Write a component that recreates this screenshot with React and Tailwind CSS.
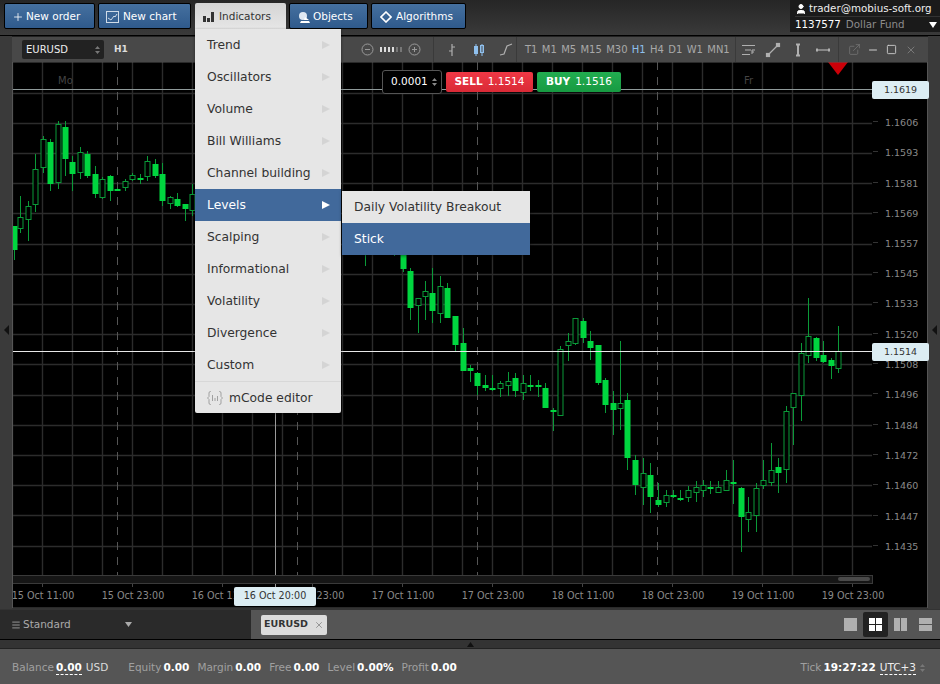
import React from 'react';
import { X, Plus, Minus, Square, ExternalLink, User, Menu } from 'lucide-react';

const FONT = 'font-["DejaVu_Sans",sans-serif]';

// x, high, low, open/close top, open/close bottom, hollow
const CANDLES = [
  [14, 226, 260, 226, 250, 0], [20, 196, 233, 217, 228, 1], [27.5, 201, 241, 206, 219, 1],
  [35, 154, 212, 169, 204, 1], [42.5, 136, 173, 139, 167, 1], [50, 139, 191, 142, 184, 0],
  [57.5, 121, 189, 124, 182, 1], [65, 121, 176, 127, 159, 0], [72, 156, 191, 162, 174, 0],
  [80, 147, 179, 152, 172, 1], [87, 151, 178, 154, 176, 0], [95, 166, 198, 174, 194, 0],
  [102, 177, 199, 179, 197, 1], [110, 175, 201, 176, 191, 0], [117, 188, 191, 189, 190, 0],
  [125, 179, 191, 181, 187, 1], [132, 173, 181, 175, 179, 1], [140, 174, 184, 178, 180, 0],
  [147, 156, 181, 161, 176, 1], [155, 159, 178, 164, 176, 0], [162, 163, 206, 174, 201, 0],
  [170, 196, 209, 197, 203, 1], [177, 193, 207, 199, 206, 0], [185, 204, 221, 204, 209, 0],
  [192, 184, 216, 194, 210, 1],
  [365, 240, 266, 240, 250, 0], [394, 240, 256, 240, 250, 0],
  [402.5, 250, 272, 250, 269, 0], [410, 268, 320, 271, 308, 0], [418, 298, 333, 298, 305, 1],
  [425, 281, 320, 291, 296, 1], [432, 268, 323, 293, 311, 0], [440, 276, 323, 286, 313, 1],
  [447, 283, 318, 288, 318, 0], [455, 316, 352, 316, 345, 0], [462.5, 328, 360, 343, 371, 0],
  [470, 365, 382, 368, 371, 0], [477, 372, 395, 373, 386, 0], [485, 375, 391, 385, 388, 0],
  [492, 375, 391, 388, 390, 0], [500, 381, 397, 383, 388, 1], [507.5, 372, 396, 381, 385, 1],
  [515, 373, 397, 378, 391, 0], [522.5, 375, 400, 383, 392, 1], [530, 375, 391, 385, 387, 0],
  [537.5, 380, 397, 385, 387, 0], [545, 383, 408, 388, 408, 0], [552.5, 408, 431, 410, 412, 0],
  [560, 346, 416, 349, 415, 1], [567.5, 333, 361, 341, 345, 1], [575, 318, 345, 318, 343, 1],
  [582.5, 318, 343, 321, 338, 0], [590, 331, 360, 341, 348, 0], [597.5, 345, 385, 345, 383, 0],
  [605, 378, 413, 380, 405, 0], [612.5, 391, 435, 403, 410, 0], [620, 341, 430, 403, 408, 1],
  [627, 393, 470, 400, 458, 0], [635, 455, 495, 460, 485, 0], [643, 458, 505, 473, 487, 1],
  [650, 463, 513, 475, 497, 0], [658, 483, 507, 500, 505, 0], [665.5, 490, 507, 495, 502, 1],
  [673, 490, 498, 495, 497, 0], [680, 490, 501, 498, 500, 0], [688, 486, 502, 490, 497, 1],
  [695.5, 481, 502, 487, 492, 1], [703, 480, 497, 485, 490, 1], [710, 481, 494, 487, 489, 0],
  [718, 481, 493, 487, 492, 1], [725.5, 470, 491, 480, 490, 1], [733, 460, 504, 482, 484, 0],
  [741, 487, 552, 488, 517, 0], [748, 497, 532, 512, 519, 1], [756, 483, 532, 488, 515, 1],
  [763, 460, 489, 480, 485, 1], [771, 443, 486, 470, 482, 1], [778, 458, 493, 467, 473, 0],
  [786, 406, 483, 411, 469, 1], [793, 393, 445, 393, 407, 1], [801, 343, 421, 353, 395, 1],
  [808, 298, 363, 336, 355, 1], [815.5, 337, 361, 338, 358, 0], [823, 341, 363, 355, 362, 0],
  [830.5, 358, 379, 360, 366, 0], [838, 326, 373, 351, 368, 1],
];

const PRICES = [
  ['1.1606', 122], ['1.1593', 152], ['1.1581', 183], ['1.1569', 213], ['1.1557', 243],
  ['1.1545', 273], ['1.1533', 303], ['1.1520', 334], ['1.1508', 364], ['1.1496', 394],
  ['1.1484', 425], ['1.1472', 455], ['1.1460', 485], ['1.1447', 516], ['1.1435', 546],
];

const TIMES = [
  ['15 Oct 11:00', 43], ['15 Oct 23:00', 133], ['16 Oct 11:00', 223], ['16 Oct 23:00', 313],
  ['17 Oct 11:00', 403], ['17 Oct 23:00', 493], ['18 Oct 11:00', 583], ['18 Oct 23:00', 673],
  ['19 Oct 11:00', 763], ['19 Oct 23:00', 853],
];

const MENU_ITEMS = ['Trend', 'Oscillators', 'Volume', 'Bill Williams', 'Channel building', 'Levels',
  'Scalping', 'Informational', 'Volatility', 'Divergence', 'Custom'];

const PERIODS = ['T1', 'M1', 'M5', 'M15', 'M30', 'H1', 'H4', 'D1', 'W1', 'MN1'];

const Candle = ({ c }) => {
  const [x, high, low, top, bottom, hollow] = c;
  const px = Math.round(x);
  return (
    <g>
      <line x1={px + 0.5} x2={px + 0.5} y1={high} y2={low} stroke="#0a9a38" strokeWidth="1" />
      {hollow ? (
        <rect x={px - 2} y={top + 0.5} width="5" height={bottom - top} fill="#000" stroke="#0a9a38" strokeWidth="1" />
      ) : (
        <rect x={px - 2.5} y={top} width="6" height={Math.max(bottom - top, 2)} fill="#00d63f" />
      )}
    </g>
  );
};

const Chart = () => {
  const vLines = Array.from({ length: 29 }, (_, i) => 12.5 + i * 30);
  const hLines = Array.from({ length: 16 }, (_, i) => 545.5 - i * 30.2);
  return (
    <svg viewBox="12 62 916 546" className="block w-[916px] h-[546px]">
      <rect x="12" y="62" width="916" height="546" fill="#000" />
      {vLines.map((x) => <line key={x} x1={x} x2={x} y1="62" y2="575" stroke="#2c2c2c" strokeWidth="1.4" />)}
      {hLines.map((y) => <line key={y} x1="12" x2="872" y1={Math.round(y) + 0.5} y2={Math.round(y) + 0.5} stroke="#2c2c2c" strokeWidth="1.4" />)}
      {[117.5, 297.5, 477.5, 657.5].map((x) => (
        <line key={x} x1={x} x2={x} y1="62" y2="575" stroke="#555" strokeDasharray="8 7" />
      ))}
      {CANDLES.map((c) => <Candle key={c[0]} c={c} />)}
      <text x="58" y="84" fontSize="10" fill="#444" className={FONT}>Mo</text>
      <text x="744" y="84" fontSize="10" fill="#444" className={FONT}>Fr</text>
      <line x1="12" x2="872" y1="89.5" y2="89.5" stroke="#8f9a9a" strokeWidth="1.2" />
      <line x1="12" x2="872" y1="351.5" y2="351.5" stroke="#e8e8e8" />
      <line x1="275.5" x2="275.5" y1="62" y2="590" stroke="#9a9a9a" />
      <path d="M828 62h20l-10 13z" fill="#cc0008" />
      {PRICES.map(([p, y]) => (
        <g key={p}>
          <line x1="873" x2="878" y1={y - 0.5} y2={y - 0.5} stroke="#333" />
          <text x="885" y={y + 4} fontSize="9.500" fill="#8a8a8a" className={FONT}>{p}</text>
        </g>
      ))}
      <rect x="12.5" y="575.5" width="860" height="8" fill="#161616" stroke="#3a3a3a" />
      <rect x="838" y="577" width="32" height="4" rx="2" fill="#4a4a4a" />
      {TIMES.map(([t, x]) => (
        <g key={t}>
          <line x1={x - 0.5} x2={x - 0.5} y1="584" y2="587" stroke="#444" />
          <text x={x} y="599" fontSize="9.600" textAnchor="middle" fill="#8a8a8a" className={FONT}>{t}</text>
        </g>
      ))}
      <rect x="12.5" y="62" width="915" height="546" fill="none" stroke="#555" />
    </svg>
  );
};

const BlueButton = ({ icon, label, className }) => (
  <button className={`h-[26px] flex items-center rounded-[2px] border border-black bg-gradient-to-b from-[#45709f] to-[#2f5a8c] pt-px text-[10.5px] text-white ${className}`}>
    {icon}
    <span>{label}</span>
  </button>
);

const IndicatorsMenu = () => (
  <div className="absolute left-0 top-[26px] w-[146px] bg-[#e6e6e6] shadow-[0_1px_3px_rgba(0,0,0,0.5)] rounded-b-[2px] z-20">
    {MENU_ITEMS.map((item) => {
      const active = item === 'Levels';
      return (
        <div key={item} className={`relative h-[32px] flex items-center justify-between pl-3 pr-[11px] text-[12.3px] ${active ? 'bg-[#41699b] text-white' : 'text-[#333]'}`}>
          <span className="pt-px">{item}</span>
          <svg width="8" height="8" viewBox="0 0 8 8"><path d="M0 0l8 4-8 4z" fill={active ? '#fff' : '#d4d4d4'} /></svg>
          {active && (
            <div className="absolute left-[147px] top-[2px] w-[188px] bg-[#e6e6e6] shadow-[0_1px_3px_rgba(0,0,0,0.5)] z-30">
              <div className="h-[31px] flex items-center px-3 pt-px text-[#333]">Daily Volatility Breakout</div>
              <div className="h-[32px] flex items-center px-3 mt-px bg-[#41699b] text-white">Stick</div>
            </div>
          )}
        </div>
      );
    })}
    <div className="h-[32px] border-t border-[#d8d8d8] flex items-center gap-[6px] pl-3 text-[12.3px] text-[#333]">
      <svg width="16" height="14" viewBox="0 0 16 14" fill="none" stroke="#a0a0a0">
        <path d="M4 .5h-.5Q2 .5 2 2v3.500L.5 7 2 8.500V12q0 1.500 1.500 1.500H4M12 .5h.5Q14 .5 14 2v3.500L15.500 7 14 8.500V12q0 1.500-1.500 1.500H12" />
        <path d="M5.500 4v6M8 7v3M10.500 5v5" />
      </svg>
      <span className="pt-px">mCode editor</span>
    </div>
  </div>
);

const TopBar = () => (
  <div className="h-[36px] flex items-start justify-between bg-gradient-to-b from-[#262626] to-[#3a3a3a] border-b border-black">
    <div className="flex pt-[3px] pl-1">
      <BlueButton className="w-[91px] pl-[7px] gap-[2px] mr-[3px]" icon={<Plus size={12} strokeWidth={1.6} />} label="New order" />
      <BlueButton className="w-[93px] pl-[7px] gap-[4px] mr-[4px]" label="New chart" icon={
        <svg width="13" height="12" viewBox="0 0 13 12" fill="none" stroke="#cfdbe8"><rect x=".5" y=".5" width="12" height="11" /><path d="M2 7l3 2 3-4 1 1 2-3" /></svg>
      } />
      <div className="relative mr-[3px]">
        <div className="h-[26px] w-[91px] flex items-center gap-[5px] pl-2 pt-px rounded-t-[2px] bg-gradient-to-b from-[#d4d4d4] to-[#e6e6e6] text-[10.5px] text-[#333]">
          <svg width="11" height="10" viewBox="0 0 11 10" fill="#333"><rect y="4" width="3" height="6" /><rect x="4" y="6" width="3" height="4" /><rect x="8" y="0" width="3" height="10" /></svg>
          <span>Indicators</span>
        </div>
        <IndicatorsMenu />
      </div>
      <BlueButton className="w-[79px] pl-2 gap-[3px] mr-[3px]" label="Objects" icon={
        <svg width="12" height="12" viewBox="0 0 12 12" fill="#fff"><circle cx="5" cy="5" r="4" fill="#dfe8f2" /><path d="M3 10h8l1 2H2z" /><path d="M7 6l4 3H6z" /></svg>
      } />
      <BlueButton className="w-[95px] pl-2 gap-[4px]" label="Algorithms" icon={
        <svg width="12" height="12" viewBox="0 0 12 12" fill="none" stroke="#fff" strokeWidth="1.600"><path d="M6 1l5 5-5 5-5-5z" /></svg>
      } />
    </div>
    <div className="w-[150px] h-[32px] bg-[#1a1a1a] text-[10.3px] pl-[5px]">
      <div className="h-[17px] flex items-center gap-[2px] pt-[1px] text-[#eee] border-b border-[#333]">
        <User size={12} fill="#fff" stroke="#fff" className="shrink-0" />
        <span>trader@mobius-soft.org</span>
      </div>
      <div className="h-[15px] flex items-center text-white">
        <span>1137577</span>
        <span className="ml-[5px] text-[#8c8c8c]">Dollar Fund</span>
        <svg className="ml-auto mr-[3px]" width="8" height="6" viewBox="0 0 8 6"><path d="M0 0h8L4 6z" fill="#fff" /></svg>
      </div>
    </div>
  </div>
);

const ToolIcon = ({ children }) => (
  <svg width="16" height="16" viewBox="0 0 16 16" fill="none" stroke="#b0b0b0" strokeWidth="1.2">{children}</svg>
);

const ChartToolbar = () => (
  <div className="h-[26px] flex items-center bg-[#484848] text-[10px] text-[#a8a8a8] border-t border-[#222]">
    <div className="w-[82px] h-[19px] ml-[10px] flex items-center justify-between pl-1 pr-1 rounded-[2px] bg-[#222] text-[#eee] text-[10px]">
      <span>EURUSD</span>
      <svg width="5" height="10" viewBox="0 0 5 10" fill="#777"><path d="M0 4l2.500-3L5 4zM0 6l2.500 3L5 6z" /></svg>
    </div>
    <span className="ml-[10px] text-[#ddd] font-bold text-[9px] w-[247px]">H1</span>
    <div className="flex items-center gap-[3px] text-[#999] w-[72px]">
      <svg width="13" height="13" viewBox="0 0 13 13" fill="none" stroke="#999"><circle cx="6.500" cy="6.500" r="5.500" /><path d="M4 6.500h5" /></svg>
      <div className="flex items-center gap-[2px] mx-[3px]">
        {['#ddd', '#ddd', '#ddd', '#ddd', '#777', '#777'].map((c, i) => (
          <svg key={i} width="2" height="5"><rect width="2" height="5" fill={c} /></svg>
        ))}
      </div>
      <svg width="13" height="13" viewBox="0 0 13 13" fill="none" stroke="#999"><circle cx="6.500" cy="6.500" r="5.500" /><path d="M4 6.500h5M6.500 4v5" /></svg>
    </div>
    <div className="h-full flex items-center gap-[11px] pl-[10px] border-l border-[#3a3a3a]">
      <ToolIcon><path d="M8 2v12M5 9h3M8 5h3" /></ToolIcon>
      <svg width="16" height="16" viewBox="0 0 16 16" fill="#8fc0ee" stroke="#8fc0ee"><path d="M5 2v12M11 2v12" /><rect x="3.500" y="4.500" width="3" height="7" /><rect x="9.500" y="3.500" width="3" height="7" fill="none" /></svg>
      <ToolIcon><path d="M2 13l4-1 3-8 5-2" /></ToolIcon>
    </div>
    <div className="h-full flex items-center gap-[4.33px] ml-[2px] pl-[8px] pr-[5px] border-l border-r border-[#3a3a3a]">
      {PERIODS.map((p) => <span key={p} className={p === 'H1' ? 'text-[#8fc0ee]' : ''}>{p}</span>)}
    </div>
    <div className="h-full flex items-center gap-[9px] pl-[6px] pr-[7px] border-r border-[#3a3a3a]">
      <svg width="14" height="12" viewBox="0 0 14 12" fill="none" stroke="#b0b0b0"><path d="M0 1.500h13M3 6h6M0 10.500h8" /><path d="M10 10V6h3M10 8h2" /></svg>
      <ToolIcon><path d="M3 13L13 3" /><rect x="1.500" y="11.500" width="3" height="3" fill="#b0b0b0" /><rect x="11.500" y="1.500" width="3" height="3" fill="#b0b0b0" /></ToolIcon>
      <ToolIcon><path d="M8 3v10" strokeWidth="2" /><path d="M6 2.500h4M6 13.500h4" strokeWidth="2" /></ToolIcon>
      <ToolIcon><path d="M2 8h12" /><path d="M2 6.500v3M14 6.500v3" strokeWidth="2" /></ToolIcon>
    </div>
    <div className="flex items-center gap-[4px] pl-[9px] text-[#a8a8a8]">
      <ExternalLink size={13} strokeWidth={1} className="text-[#888]" />
      <Minus size={12} strokeWidth={2} className="ml-[2px] text-[#ccc]" />
      <Square size={11} strokeWidth={2} className="ml-[3px] text-[#ccc]" />
      <X size={12} strokeWidth={1} className="ml-[4px]" />
    </div>
  </div>
);

const SidePanel = ({ className, children }) => (
  <div className={`flex items-center justify-center bg-[#3a3a3a] pt-[14px] ${className}`}>{children}</div>
);

const OrderWidget = () => (
  <div className="absolute left-[370px] top-[8px] flex items-center gap-[4px] text-[10.5px] text-white">
    <div className="w-[60px] h-[24px] flex items-center justify-between pl-2 pr-1 rounded-[3px] bg-black border border-[#555]">
      <span>0.0001</span>
      <svg width="5" height="10" viewBox="0 0 5 10" fill="#888"><path d="M0 4l2.500-3L5 4zM0 6l2.500 3L5 6z" /></svg>
    </div>
    <div className="w-[87px] h-[20px] flex items-center justify-center gap-[5px] rounded-[2px] bg-gradient-to-b from-[#f03845] to-[#d92a36]">
      <b>SELL</b><span>1.1514</span>
    </div>
    <div className="w-[84px] h-[20px] flex items-center justify-center gap-[5px] rounded-[2px] bg-gradient-to-b from-[#22ad50] to-[#179a42]">
      <b>BUY</b><span>1.1516</span>
    </div>
  </div>
);

const PriceTag = ({ value, className }) => (
  <div className={`absolute left-[860px] w-[57px] h-[18px] flex items-center justify-center rounded-[2px] bg-[#dcedf3] text-[9.5px] text-[#333] ${className}`}>{value}</div>
);

const ViewIcon = ({ active, children }) => (
  <div className={`w-[25px] h-[25px] flex items-center justify-center rounded-[2px] ${active ? 'bg-[#222]' : ''}`}>
    <svg width="13" height="13" viewBox="0 0 13 13" fill={active ? '#fff' : '#b0b0b0'}>{children}</svg>
  </div>
);

const Stat = ({ label, value }) => (
  <span className="flex gap-[2px]">
    <span className="text-[#a0a0a0]">{label}</span>
    <b className="text-white">{value}</b>
  </span>
);

const App = () => (
  <div className={`w-[940px] h-[684px] flex flex-col overflow-hidden bg-[#333] ${FONT}`}>
    <TopBar />
    <div className="h-[573px] flex">
      <SidePanel className="w-[12px]">
        <svg width="5" height="10" viewBox="0 0 5 10"><path d="M5 0v10L0 5z" fill="#111" /></svg>
      </SidePanel>
      <div className="w-[916px] relative">
        <ChartToolbar />
        <div className="relative">
          <Chart />
          <OrderWidget />
          <PriceTag value="1.1619" className="top-[19px]" />
          <PriceTag value="1.1514" className="top-[281px]" />
          <div className="absolute left-[222px] top-[525px] w-[82px] h-[19px] flex items-center justify-center rounded-[2px] bg-[#dcedf3] text-[9.6px] text-[#333]">16 Oct 20:00</div>
        </div>
      </div>
      <SidePanel className="flex-1">
        <svg width="5" height="10" viewBox="0 0 5 10"><path d="M5 0v10L0 5z" fill="#111" /></svg>
      </SidePanel>
    </div>
    <div className="h-[30px] flex border-b border-black mt-[1px]">
      <div className="w-[251px] flex items-center pl-[11px] gap-[2px] bg-[#2a2a2a] text-[10.5px] text-[#aaa]">
        <Menu size={10} strokeWidth={2} className="text-[#aaa]" />
        <span className="pt-px">Standard</span>
        <svg className="ml-[52px]" width="7" height="5" viewBox="0 0 7 5"><path d="M0 0h7L3.500 5z" fill="#aaa" /></svg>
      </div>
      <div className="flex-1 flex items-center justify-between pl-[10px] pr-[2px] bg-[#555]">
        <div className="w-[66px] h-[20px] flex items-center justify-center gap-[6px] rounded-[2px] bg-[#dcdcdc] text-[9.5px] font-bold text-[#333]">
          <span>EURUSD</span>
          <X size={10} strokeWidth={1} />
        </div>
        <div className="flex items-center">
          <ViewIcon><rect width="13" height="13" /></ViewIcon>
          <ViewIcon active><rect width="6" height="6" /><rect x="7" width="6" height="6" /><rect y="7" width="6" height="6" /><rect x="7" y="7" width="6" height="6" /></ViewIcon>
          <ViewIcon><rect width="6" height="13" /><rect x="7" width="6" height="13" /></ViewIcon>
          <ViewIcon><rect width="13" height="6" /><rect y="7" width="13" height="6" /></ViewIcon>
        </div>
      </div>
    </div>
    <div className="h-[9px] flex justify-end items-center bg-[#333] border-b border-[#222]">
      <svg className="mr-[466px]" width="7" height="5" viewBox="0 0 7 5"><path d="M0 5h7L3.500 0z" fill="#111" /></svg>
    </div>
    <div className="flex-1 flex items-center justify-between pt-[3px] pl-3 pr-[15px] bg-[#555] text-[10.5px]">
      <div className="flex items-center">
        <span className="text-[#a0a0a0]">Balance</span>
        <b className="ml-[2px] text-white border-b border-dashed border-white leading-[13px]">0.00</b>
        <span className="ml-[4px] text-[#ddd]">USD</span>
        <div className="flex gap-[8px] ml-[20px]">
          <Stat label="Equity" value="0.00" />
          <Stat label="Margin" value="0.00" />
          <Stat label="Free" value="0.00" />
          <Stat label="Level" value="0.00%" />
          <Stat label="Profit" value="0.00" />
        </div>
      </div>
      <div className="flex items-center gap-[4px]">
        <Stat label="Tick" value="19:27:22" />
        <span className="text-[#eee] border-b border-dashed border-white leading-[13px]">UTC+3</span>
        <svg width="5" height="10" viewBox="0 0 5 10" fill="#777"><path d="M0 4l2.500-3L5 4zM0 6l2.500 3L5 6z" /></svg>
      </div>
    </div>
  </div>
);

export default App;
